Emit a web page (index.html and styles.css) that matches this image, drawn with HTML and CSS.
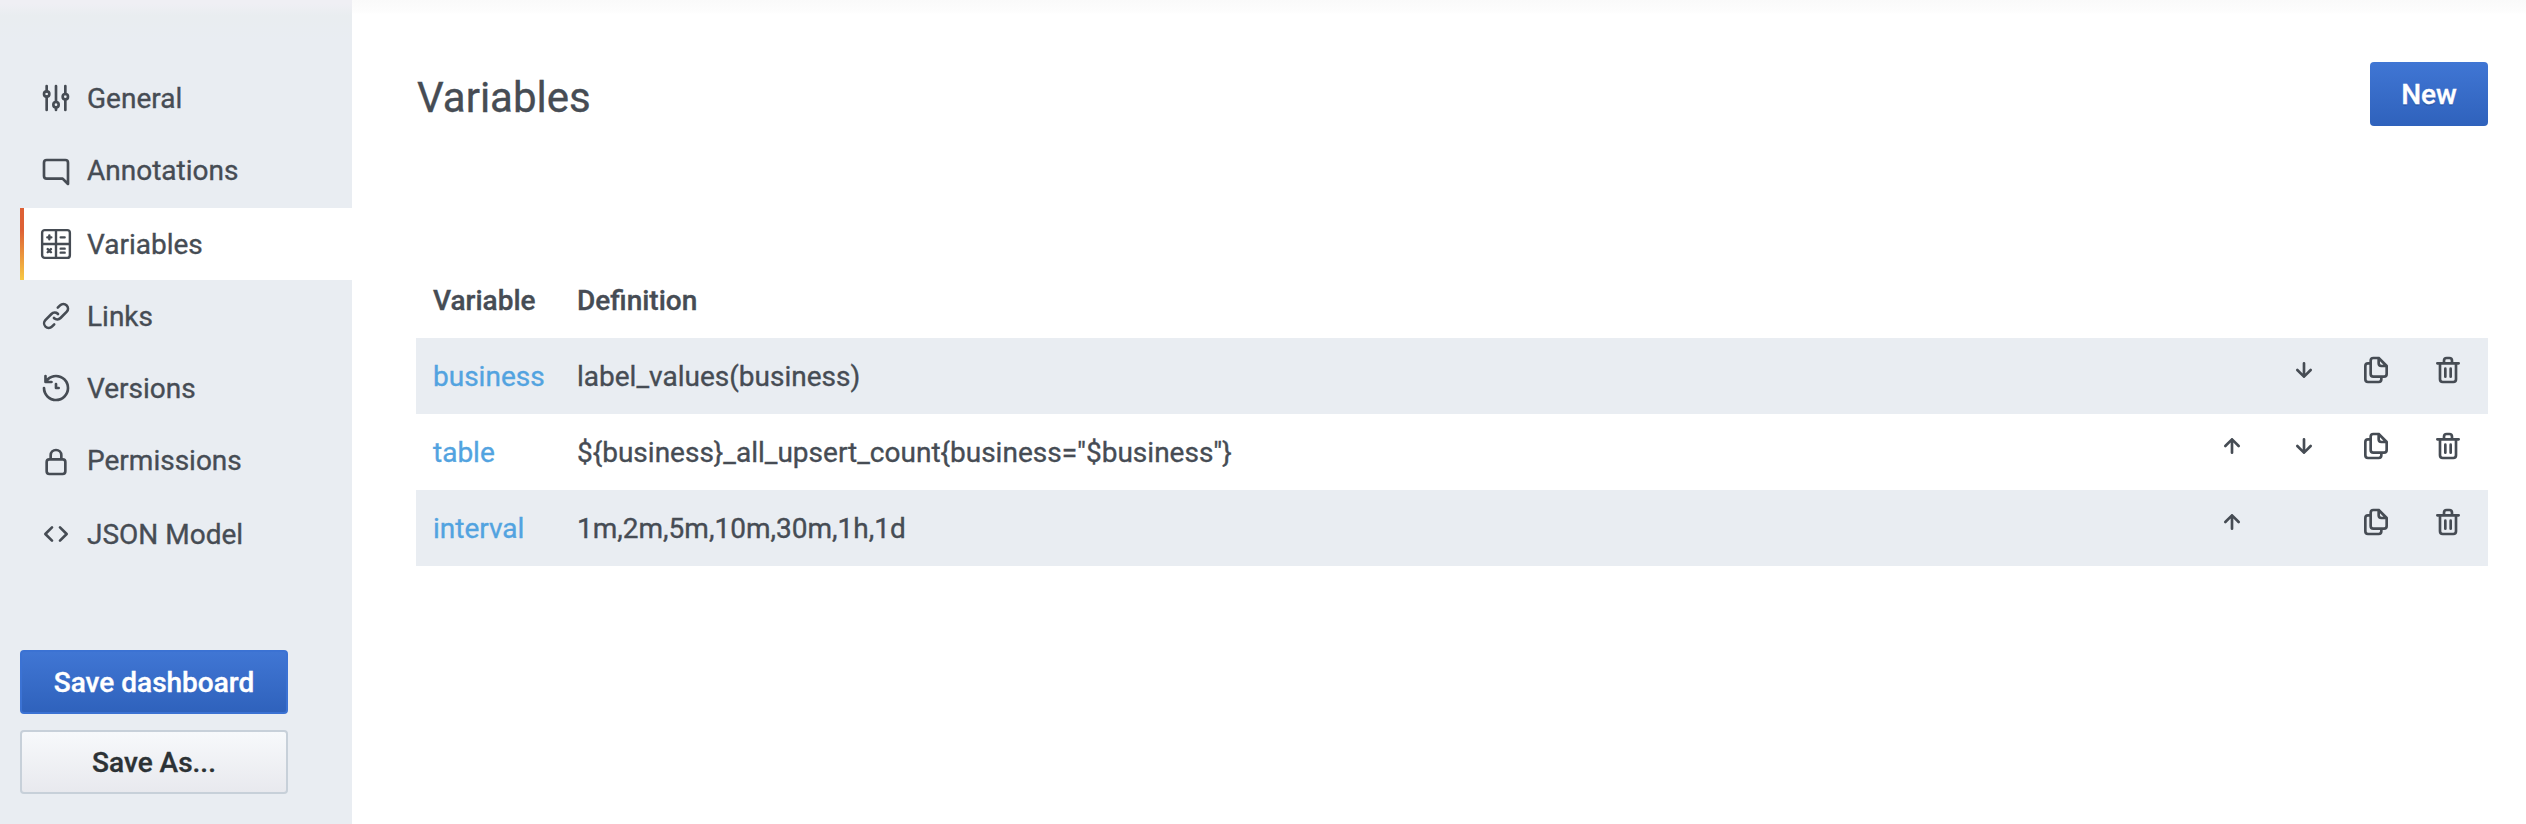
FILE: index.html
```html
<!DOCTYPE html>
<html lang="en">
<head>
<meta charset="utf-8">
<title>Variables</title>
<link rel="stylesheet" href="styles.css">
</head>
<body>
<svg class="sprite" aria-hidden="true">
  <symbol id="arrow-down" viewBox="0 0 24 24"><path d="M17.71,11.29a1,1,0,0,0-1.42,0L13,14.59V7a1,1,0,0,0-2,0v7.59l-3.29-3.3a1,1,0,0,0-1.42,1.42l5,5a1,1,0,0,0,.33.21.94.94,0,0,0,.76,0,1,1,0,0,0,.33-.21l5-5A1,1,0,0,0,17.71,11.29Z"/></symbol>
  <symbol id="arrow-up" viewBox="0 0 24 24"><path transform="matrix(1 0 0 -1 0 24)" d="M17.71,11.29a1,1,0,0,0-1.42,0L13,14.59V7a1,1,0,0,0-2,0v7.59l-3.29-3.3a1,1,0,0,0-1.42,1.42l5,5a1,1,0,0,0,.33.21.94.94,0,0,0,.76,0,1,1,0,0,0,.33-.21l5-5A1,1,0,0,0,17.71,11.29Z"/></symbol>
  <symbol id="copy" viewBox="0 0 24 24"><path d="M21,8.94a1.31,1.31,0,0,0-.06-.27l0-.09a1.07,1.07,0,0,0-.19-.28h0l-6-6h0a1.07,1.07,0,0,0-.28-.19.32.32,0,0,0-.09,0A.88.88,0,0,0,14.05,2H10A3,3,0,0,0,7,5V6H6A3,3,0,0,0,3,9V19a3,3,0,0,0,3,3h8a3,3,0,0,0,3-3V18h1a3,3,0,0,0,3-3V9S21,9,21,8.94ZM15,5.41,17.59,8H16a1,1,0,0,1-1-1ZM15,19a1,1,0,0,1-1,1H6a1,1,0,0,1-1-1V9A1,1,0,0,1,6,8H7v7a3,3,0,0,0,3,3h5Zm4-4a1,1,0,0,1-1,1H10a1,1,0,0,1-1-1V5a1,1,0,0,1,1-1h3V7a3,3,0,0,0,3,3h3Z"/></symbol>
  <symbol id="trash" viewBox="0 0 24 24"><path d="M10,18a1,1,0,0,0,1-1V11a1,1,0,0,0-2,0v6A1,1,0,0,0,10,18ZM20,6H16V5a3,3,0,0,0-3-3H11A3,3,0,0,0,8,5V6H4A1,1,0,0,0,4,8H5V19a3,3,0,0,0,3,3h8a3,3,0,0,0,3-3V8h1a1,1,0,0,0,0-2ZM10,5a1,1,0,0,1,1-1h2a1,1,0,0,1,1,1V6H10Zm7,14a1,1,0,0,1-1,1H8a1,1,0,0,1-1-1V8H17Zm-3-1a1,1,0,0,0,1-1V11a1,1,0,0,0-2,0v6A1,1,0,0,0,14,18Z"/></symbol>
</svg>
<div class="page">
  <aside class="sidebar">
    <nav class="nav">
      <a class="nav-item"><svg class="icon line" viewBox="0 0 24 24"><path d="M5 3v4M5 11v10M12 3v12M12 19v2M19 3v6M19 13v8"/><circle cx="5" cy="9" r="2"/><circle cx="12" cy="17" r="2"/><circle cx="19" cy="11" r="2"/></svg><span class="label">General</span></a>
      <a class="nav-item"><svg class="icon low" viewBox="0 0 24 24"><path d="M19,2H5A3,3,0,0,0,2,5V15a3,3,0,0,0,3,3H16.59l3.7,3.71A1,1,0,0,0,21,22a.84.84,0,0,0,.38-.08A1,1,0,0,0,22,21V5A3,3,0,0,0,19,2Zm1,16.59-2.29-2.3A1,1,0,0,0,17,16H5a1,1,0,0,1-1-1V5A1,1,0,0,1,5,4H19a1,1,0,0,1,1,1Z"/></svg><span class="label">Annotations</span></a>
      <a class="nav-item spaced active"><svg class="icon line calc" viewBox="0 0 24 24"><rect x="1.6" y="1.6" width="20.8" height="20.8" rx="2"/><path d="M12 2v20M2 12h20M5.5 7h3M7 5.5v3M15.5 7h3M5.8 15.8l2.4 2.4M8.2 15.8l-2.4 2.4M15.5 15.5h3M15.5 18.5h3"/></svg><span class="label">Variables</span></a>
      <a class="nav-item"><svg class="icon" viewBox="0 0 24 24"><path d="M10,17.55,8.23,19.27a2.47,2.47,0,0,1-3.5-3.5l4.54-4.55a2.46,2.46,0,0,1,3.39-.09l.12.1a1,1,0,0,0,1.4-1.43A2.75,2.75,0,0,0,14,9.59a4.46,4.46,0,0,0-6.09.22L3.31,14.36a4.48,4.48,0,0,0,6.33,6.33L11.37,19A1,1,0,0,0,10,17.55ZM20.69,3.31a4.49,4.49,0,0,0-6.33,0L12.63,5A1,1,0,0,0,14,6.45l1.73-1.72a2.47,2.47,0,0,1,3.5,3.5l-4.54,4.55a2.46,2.46,0,0,1-3.39.09l-.12-.1a1,1,0,0,0-1.4,1.43,2.75,2.75,0,0,0,.23.21,4.47,4.47,0,0,0,6.09-.22l4.55-4.55A4.49,4.49,0,0,0,20.69,3.31Z"/></svg><span class="label">Links</span></a>
      <a class="nav-item"><svg class="icon" viewBox="0 0 24 24"><path d="M12,2A10,10,0,0,0,5.12,4.77V3a1,1,0,0,0-2,0V7.5a1,1,0,0,0,1,1H8.62a1,1,0,0,0,0-2H6.22A8,8,0,1,1,4,12a1,1,0,0,0-2,0A10,10,0,1,0,12,2Zm0,6a1,1,0,0,0-1,1v3a1,1,0,0,0,1,1h2a1,1,0,0,0,0-2H13V9A1,1,0,0,0,12,8Z"/></svg><span class="label">Versions</span></a>
      <a class="nav-item"><svg class="icon low" viewBox="0 0 24 24"><path d="M17,9V7A5,5,0,0,0,7,7V9a3,3,0,0,0-3,3v7a3,3,0,0,0,3,3H17a3,3,0,0,0,3-3V12A3,3,0,0,0,17,9ZM9,7a3,3,0,0,1,6,0V9H9Zm9,12a1,1,0,0,1-1,1H7a1,1,0,0,1-1-1V12a1,1,0,0,1,1-1H17a1,1,0,0,1,1,1Z"/></svg><span class="label">Permissions</span></a>
      <a class="nav-item spaced"><svg class="icon line" viewBox="0 0 24 24"><path d="M9 7l-5 5 5 5M15 7l5 5-5 5"/></svg><span class="label">JSON Model</span></a>
    </nav>
    <div class="actions">
      <button class="btn primary bordered">Save dashboard</button>
      <button class="btn secondary">Save As...</button>
    </div>
  </aside>
  <main class="main">
    <header class="head">
      <h1 class="title">Variables</h1>
      <button class="btn primary new">New</button>
    </header>
    <div class="table">
      <div class="row header"><span>Variable</span><span>Definition</span></div>
      <div class="row odd"><a class="link">business</a><span>label_values(business)</span><i></i><svg class="icon"><use href="#arrow-down"/></svg><svg class="icon"><use href="#copy"/></svg><svg class="icon"><use href="#trash"/></svg></div>
      <div class="row"><a class="link">table</a><span>${business}_all_upsert_count{business="$business"}</span><svg class="icon"><use href="#arrow-up"/></svg><svg class="icon"><use href="#arrow-down"/></svg><svg class="icon"><use href="#copy"/></svg><svg class="icon"><use href="#trash"/></svg></div>
      <div class="row odd"><a class="link">interval</a><span>1m,2m,5m,10m,30m,1h,1d</span><svg class="icon"><use href="#arrow-up"/></svg><i></i><svg class="icon"><use href="#copy"/></svg><svg class="icon"><use href="#trash"/></svg></div>
    </div>
  </main>
</div>
</body>
</html>
```
FILE: styles.css
```css
* { box-sizing: border-box; }
body {
  margin: 0;
  background: #fff;
  color: #464c54;
  font: 400 28px/42px Roboto, sans-serif;
  -webkit-text-stroke: 0.35px currentColor;
}
.sprite { display: none; }
.page { display: flex; height: 824px; overflow: hidden; }
.sidebar {
  width: 352px;
  flex: none;
  padding: 62px 0 0 20px;
  background: linear-gradient(#efeff4 0, #efeff4 4px, #e9edf0 16px, #e9edf2 40px);
}
.nav { display: flex; flex-direction: column; }
.nav-item {
  display: flex;
  align-items: center;
  gap: 15px;
  height: 72px;
  padding-left: 20px;
}
.label { padding-top: 2px; }
.spaced { margin-top: 2px; }
.active {
  background: linear-gradient(#dd6035 0, #dd6035 30%, #f7c844 100%) 0 0 / 4px 100% no-repeat, #fff;
}
.icon { display: block; width: 32px; height: 32px; flex: none; fill: currentColor; }
.line { fill: none; stroke: currentColor; stroke-width: 2; stroke-linecap: round; stroke-linejoin: round; }
.calc { stroke-width: 1.8; }
.low { margin-top: 4px; }
.actions { display: flex; flex-direction: column; gap: 16px; width: 268px; margin-top: 80px; }
.btn {
  height: 64px;
  padding: 2px 0 0;
  border: 0;
  border-radius: 4px;
  font: 500 28px/58px Roboto, sans-serif;
  -webkit-text-stroke: 0.35px currentColor;
}
.primary { color: #fff; background: linear-gradient(#4076d4, #2f62bc); }
.bordered { border: 2px solid #3b72d3; }
.secondary { color: #2c3235; border: 2px solid #c7d0d9; background: linear-gradient(#f7f9fb, #e8e9ee); }
.new { width: 118px; text-shadow: 0 2px 0 rgba(0, 0, 0, .12); }
.main { flex: 1; padding: 62px 38px 0 64px; background: linear-gradient(#fafafa, #fdfdfd 12px, #fff 14px); }
.head { display: flex; justify-content: space-between; height: 202px; }
.title { margin: 6px 0 0 1px; font-size: 42px; line-height: 60px; font-weight: 400; }
.row {
  display: grid;
  grid-template-columns: 144px 1fr repeat(4, 72px);
  height: 76px;
  padding: 0 4px 0 16px;
  line-height: 78px;
}
.row > span, .row > a { padding-left: 1px; }
.row .icon { margin: 16px 20px 0; }
.header { height: 74px; line-height: 74px; font-weight: 500; }
.odd { background: #e9edf2; }
.link { color: #52a3e0; }
```
